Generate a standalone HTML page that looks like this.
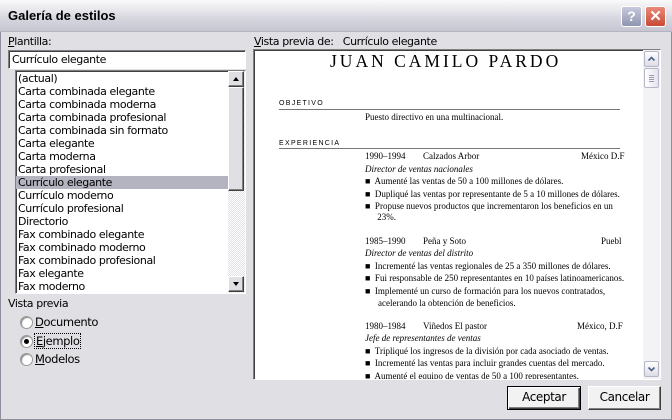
<!DOCTYPE html>
<html><head><meta charset="utf-8"><style>
*{box-sizing:border-box;margin:0;padding:0}
body{width:672px;height:420px;overflow:hidden;background:#e0dfe3;font-family:Tahoma,"DejaVu Sans","Liberation Sans",sans-serif;font-size:11px;color:#000;position:relative}
.a{position:absolute}
#win{left:0;top:0;width:672px;height:420px;border:1px solid #8e8f9c;border-top:none}
#title{left:0;top:0;width:672px;height:32px;background:linear-gradient(#fafafb,#d6d6df 60%,#c6c6d2);border-bottom:1px solid #b4b4c0}
#title span{position:absolute;left:8px;top:8px;font-weight:bold;font-size:13px;font-family:"Liberation Sans",sans-serif;color:#000}
.tb{top:6px;width:21px;height:21px;border-radius:3px;border:1px solid #fff}
#hb{left:621px;background:linear-gradient(#c7c9dd,#9095b0)}
#cb{left:645px;background:linear-gradient(#e98a78,#c94a35)}
.lbl{font-size:11px;font-family:"DejaVu Sans",sans-serif;letter-spacing:-0.4px}
.sunk{border:1px solid;border-color:#7f7f7f #fff #fff #7f7f7f;box-shadow:inset 1px 1px 0 #404040}
#list div.it{height:13px;line-height:13px;padding-left:2px;font-size:11px;font-family:"DejaVu Sans",sans-serif;letter-spacing:-0.4px;white-space:nowrap}
.sel{background:#b3b4bf}
.sbtn{width:16px;height:16px;background:#e0dfe3;border:1px solid;border-color:#fff #404040 #404040 #fff;box-shadow:inset -1px -1px 0 #808080}
.up,.dn{position:absolute;left:4px;width:0;height:0;border-left:3.5px solid transparent;border-right:3.5px solid transparent}
.up{top:5px;border-bottom:4px solid #000}
.dn{top:5px;border-top:4px solid #000}
.pv{font-family:"Liberation Serif",serif;font-size:9px;white-space:nowrap}
.h{font-family:"Liberation Sans",sans-serif;font-size:7px;letter-spacing:1.3px}
.rule{height:1px;background:#777}
.rad{width:13px;height:13px;border-radius:50%;background:#fff;border:1px solid #999;box-shadow:inset 1px 1px 1px #888}
.btn{height:24px;background:#f2f2f2;border:1px solid;border-color:#fff #404040 #404040 #fff;box-shadow:inset -1px -1px 0 #808080;text-align:center;line-height:21px;font-size:12px;font-family:"DejaVu Sans",sans-serif;letter-spacing:-0.4px}
</style></head><body>
<div class="a" id="win"></div>
<div class="a" id="title"><span>Galería de estilos</span></div>
<div class="a tb" id="hb"><div style="color:#fff;font:bold 14px 'Liberation Sans';text-align:center;line-height:19px">?</div></div>
<div class="a tb" id="cb"><div style="color:#fff;font:bold 15px 'Liberation Sans';text-align:center;line-height:19px">✕</div></div>

<div class="a lbl" style="left:8px;top:35px"><u>P</u>lantilla:</div>
<div class="a sunk" style="left:8px;top:50px;width:238px;height:19px;background:#fff"><div class="lbl" style="padding:2px 0 0 3px">Currículo elegante</div></div>

<div class="a sunk" style="left:15px;top:70px;width:231px;height:224px;background:#fff;overflow:hidden" id="list">
<div style="position:absolute;left:0;top:1px;width:212px">
<div class="it">(actual)</div><div class="it">Carta combinada elegante</div><div class="it">Carta combinada moderna</div><div class="it">Carta combinada profesional</div><div class="it">Carta combinada sin formato</div><div class="it">Carta elegante</div><div class="it">Carta moderna</div><div class="it">Carta profesional</div><div class="it sel">Currículo elegante</div><div class="it">Currículo moderno</div><div class="it">Currículo profesional</div><div class="it">Directorio</div><div class="it">Fax combinado elegante</div><div class="it">Fax combinado moderno</div><div class="it">Fax combinado profesional</div><div class="it">Fax elegante</div><div class="it">Fax moderno</div>
</div>
<div style="position:absolute;left:212px;top:0;width:17px;height:222px;background:repeating-conic-gradient(#fff 0 25%,#e0dfe3 0 50%) 0 0/2px 2px"></div>
<div class="sbtn" style="position:absolute;left:212px;top:0"><div class="up"></div></div>
<div class="sbtn" style="position:absolute;left:212px;top:16px;height:104px"></div>
<div class="sbtn" style="position:absolute;left:212px;top:205px"><div class="dn"></div></div>
</div>

<div class="a lbl" style="left:8px;top:297px">Vista previa</div>
<div class="a rad" style="left:20px;top:316px"></div><div class="a lbl" style="left:35px;top:315px;font-size:11.5px"><u>D</u>ocumento</div>
<div class="a rad" style="left:20px;top:335px"><div style="width:5px;height:5px;background:#000;border-radius:50%;margin:3px"></div></div><div class="a lbl" style="left:34px;top:333px;font-size:11.5px;border:1px dotted #000;padding:0 1px"><u>E</u>jemplo</div>
<div class="a rad" style="left:20px;top:353px"></div><div class="a lbl" style="left:35px;top:352px;font-size:11.5px"><u>M</u>odelos</div>

<div class="a lbl" style="left:254px;top:35px"><u>V</u>ista previa de:&nbsp;&nbsp;&nbsp;Currículo elegante</div>
<div class="a sunk" style="left:253px;top:49px;width:408px;height:331px;background:#fff;overflow:hidden">
<div class="a pv" style="left:76px;top:1px;font-size:17.5px;letter-spacing:3px">JUAN CAMILO PARDO</div>
<div class="a h" style="left:25px;top:50px">OBJETIVO</div>
<div class="a rule" style="left:25px;top:59px;width:341px"></div>
<div class="a pv" style="left:111px;top:62px">Puesto directivo en una multinacional.</div>
<div class="a h" style="left:25px;top:90px">EXPERIENCIA</div>
<div class="a rule" style="left:25px;top:98px;width:341px"></div>
<div class="a pv" style="left:111px;top:101px">1990–1994</div><div class="a pv" style="left:169px;top:101px">Calzados Arbor</div><div class="a pv" style="left:327px;top:101px">México D.F</div>
<div class="a pv" style="left:111px;top:114px;font-style:italic">Director de ventas nacionales</div>
<div class="a pv" style="left:111px;top:126px">■&nbsp; Aumenté las ventas de 50 a 100 millones de dólares.</div>
<div class="a pv" style="left:111px;top:139px">■&nbsp; Dupliqué las ventas por representante de 5 a 10 millones de dólares.</div>
<div class="a pv" style="left:111px;top:151px">■&nbsp; Propuse nuevos productos que incrementaron los beneficios en un</div>
<div class="a pv" style="left:121px;top:162px">&nbsp;23%.</div>
<div class="a pv" style="left:111px;top:186px">1985–1990</div><div class="a pv" style="left:169px;top:186px">Peña y Soto</div><div class="a pv" style="left:347px;top:186px">Puebl</div>
<div class="a pv" style="left:111px;top:198px;font-style:italic">Director de ventas del distrito</div>
<div class="a pv" style="left:111px;top:211px">■&nbsp; Incrementé las ventas regionales de 25 a 350 millones de dólares.</div>
<div class="a pv" style="left:111px;top:223px">■&nbsp; Fui responsable de 250 representantes en 10 países latinoamericanos.</div>
<div class="a pv" style="left:111px;top:236px">■&nbsp; Implementé un curso de formación para los nuevos contratados,</div>
<div class="a pv" style="left:124px;top:248px">acelerando la obtención de beneficios.</div>
<div class="a pv" style="left:111px;top:271px">1980–1984</div><div class="a pv" style="left:169px;top:271px">Viñedos El pastor</div><div class="a pv" style="left:323px;top:271px">México, D.F</div>
<div class="a pv" style="left:111px;top:283px;font-style:italic">Jefe de representantes de ventas</div>
<div class="a pv" style="left:111px;top:296px">■&nbsp; Tripliqué los ingresos de la división por cada asociado de ventas.</div>
<div class="a pv" style="left:111px;top:308px">■&nbsp; Incrementé las ventas para incluir grandes cuentas del mercado.</div>
<div class="a pv" style="left:111px;top:321px">■&nbsp; Aumenté el equipo de ventas de 50 a 100 representantes.</div>
<div class="a" style="left:389px;top:0;width:17px;height:329px;background:#f3f3f5"></div>
<div class="a" style="left:390px;top:1px;width:15px;height:16px;border:1px solid #b5b7c8;border-radius:2px;background:linear-gradient(#fff,#dcdce4)"><svg width="13" height="14" style="position:absolute;left:0;top:0"><path d="M3.5 8.5 L6.5 5.5 L9.5 8.5" fill="none" stroke="#4d6185" stroke-width="1.6"/></svg></div>
<div class="a" style="left:390px;top:18px;width:15px;height:20px;border:1px solid #b5b7c8;border-radius:2px;background:linear-gradient(90deg,#fff,#e3e3ea)"><svg width="13" height="18" style="position:absolute;left:0;top:0"><path d="M4 6.5h5M4 8.5h5M4 10.5h5M4 12.5h5" stroke="#9a9cae" stroke-width="1"/></svg></div>
<div class="a" style="left:390px;top:311px;width:15px;height:16px;border:1px solid #b5b7c8;border-radius:2px;background:linear-gradient(#fff,#dcdce4)"><svg width="13" height="14" style="position:absolute;left:0;top:0"><path d="M3.5 5.5 L6.5 8.5 L9.5 5.5" fill="none" stroke="#4d6185" stroke-width="1.6"/></svg></div>
</div>

<div class="a btn" style="left:507px;top:386px;width:74px;border:1px solid #000;box-shadow:inset 1px 1px 0 #fff,inset -1px -1px 0 #404040,inset -2px -2px 0 #808080">Aceptar</div>
<div class="a btn" style="left:588px;top:386px;width:73px">Cancelar</div>
</body></html>
